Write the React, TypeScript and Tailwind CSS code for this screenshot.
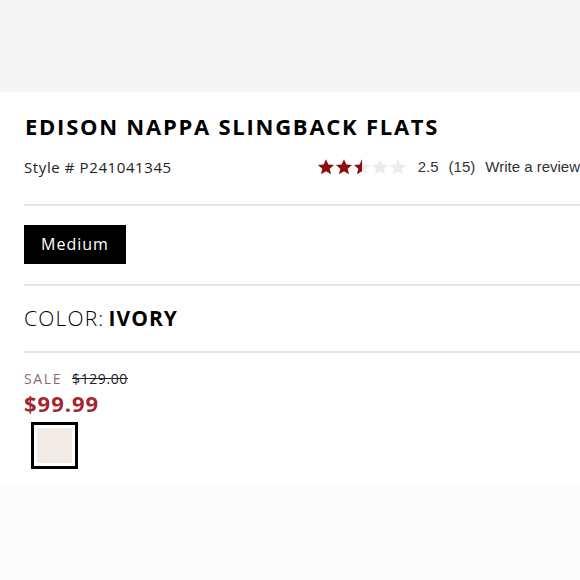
function Stars({ rating }: { rating: number }) {
  const d = "M12 1.5l3.1 7.1 7.6.6-5.8 5 1.8 7.5L12 17.7l-6.7 4 1.8-7.5-5.8-5 7.6-.6z";
  return (
    <div className="flex items-center">
      {[0, 1, 2, 3, 4].map((i) => {
        const fill = Math.max(0, Math.min(1, rating - i));
        return (
          <span key={i} className="relative block h-[18px] w-[18px]">
            <svg viewBox="0 0 24 24" className="absolute inset-0 h-[18px] w-[18px]">
              <path d={d} fill="#ececec" />
            </svg>
            <span className="absolute inset-y-0 left-0 overflow-hidden" style={{ width: `${fill * 100}%` }}>
              <svg viewBox="0 0 24 24" className="h-[18px] w-[18px]">
                <path d={d} fill="#8c0d0f" />
              </svg>
            </span>
          </span>
        );
      })}
    </div>
  );
}

export default function App() {
  const font = { fontFamily: '"Open Sans", "DejaVu Sans", sans-serif' };
  return (
    <div className="h-[580px] w-[580px] overflow-hidden bg-white" style={font}>
      <div className="h-[92px] bg-[#f5f5f5]" />

      <div className="pl-[24px]">
        <h1 className="pt-[20px] pl-[1px] text-[22px] font-bold leading-[28px] tracking-[1.75px] text-black">
          EDISON NAPPA SLINGBACK FLATS
        </h1>

        <div className="mt-[16px] flex items-center whitespace-nowrap">
          <div className="w-[293px] text-[15px] tracking-[0.6px] text-[#222]">Style # P241041345</div>
          <div
            className="flex items-center gap-[10px] text-[15px] text-[#333]"
            style={{ fontFamily: '"Liberation Sans", Arial, sans-serif' }}
          >
            <Stars rating={2.5} />
            <span className="ml-[1px]">2.5</span>
            <span>(15)</span>
            <span>Write a review</span>
          </div>
        </div>

        <div className="mt-[25px] h-[2px] bg-[#e6e6e6]" />

        <button className="mt-[19px] flex h-[39px] w-[102px] items-center justify-center bg-black text-[16px] tracking-[1px] text-white">
          Medium
        </button>

        <div className="mt-[20px] h-[2px] bg-[#e6e6e6]" />

        <div className="mt-[19px] flex items-baseline text-[21px] leading-[26px] text-black">
          <span className="font-light tracking-[1.2px]">COLOR:</span>
          <span className="ml-[4px] font-bold tracking-[1px]">IVORY</span>
        </div>

        <div className="mt-[20px] h-[2px] bg-[#e6e6e6]" />

        <div className="mt-[16px] flex items-center gap-[10px] text-[14px] leading-[19px]">
          <span className="tracking-[1.6px] text-[#8a6a70]">SALE</span>
          <span className="tracking-[0.6px] text-[#222] line-through">$129.00</span>
        </div>
        <div className="text-[22px] font-bold leading-[30px] tracking-[1px] text-[#a3262f]">$99.99</div>

        <div className="ml-[7px] mt-[4px] h-[47px] w-[47px] border-[3px] border-black bg-white p-[3px]">
          <div className="h-full w-full bg-[#f3ece6]" />
        </div>
      </div>

      <div className="mt-[18px] h-[100px] bg-[#fbfbfb]" />
    </div>
  );
}
